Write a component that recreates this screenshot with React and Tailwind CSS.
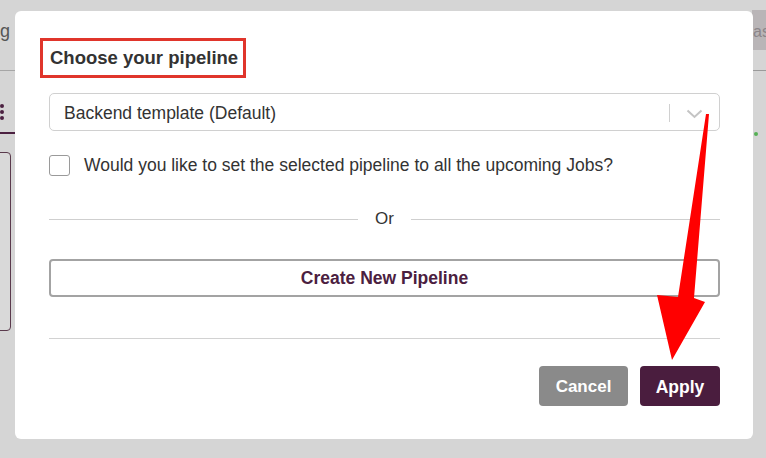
export default function App() {
  return (
    <div
      className="relative w-[766px] h-[458px] overflow-hidden bg-[#d5d5d5]"
      style={{ fontFamily: '"Liberation Sans", Arial, sans-serif' }}
    >
      {/* page behind the overlay */}
      <div className="absolute left-0 top-[18px] text-[18px] text-[#555]">g</div>
      <div className="absolute left-0 top-[70px] w-[16px] h-px bg-[#a6a6a6]" />
      <div className="absolute left-0 top-[104px] flex flex-col gap-[2px]">
        <span className="w-[4px] h-[4px] rounded-full bg-[#4b2040]" />
        <span className="w-[4px] h-[4px] rounded-full bg-[#4b2040]" />
        <span className="w-[4px] h-[4px] rounded-full bg-[#4b2040]" />
      </div>
      <div className="absolute left-0 top-[132px] w-[16px] h-[2px] bg-[#4b2040]" />
      <div className="absolute -left-[6px] top-[152px] w-[17px] h-[179px] rounded-[4px] border border-[#5a3a4c] bg-[#d9d9d9]" />
      <div className="absolute left-[752px] top-[10px] w-[14px] h-[40px] overflow-hidden bg-[#b9b5b7] text-[16px] text-[#8b8589] pt-[10px] pl-[1px]">
        as
      </div>
      <div className="absolute left-[752px] top-[70px] w-[20px] h-px bg-[#9a9a9a]" />
      <div className="absolute left-[754px] top-[132px] w-[4px] h-[4px] rounded-full bg-[#55b055]" />

      {/* modal */}
      <div className="absolute left-[15px] top-[11px] w-[738px] h-[428px] bg-white rounded-[6px] pt-[27px] pl-[34px] pr-[33px]">
        <div className="-ml-[9px] w-fit h-[40px] flex items-center border-[3px] border-[#e0352b] pl-[7px] pr-[5px]">
          <h2 className="text-[18.5px] leading-[24px] font-bold text-[#333]">Choose your pipeline</h2>
        </div>

        <div className="mt-[15px] h-[38px] rounded-[5px] border border-[#d0d0d0] flex items-center pl-[14px] pr-[16px] pt-[1px]">
          <span className="flex-1 text-[17.5px] leading-[24px] text-[#333]">Backend template (Default)</span>
          <span className="w-px h-[18px] bg-[#d0d0d0] mr-[16px]" />
          <svg width="17" height="10" viewBox="0 0 17 10" fill="none" className="mt-[2px]">
            <path d="M1.5 1.5 L8.5 8 L15.5 1.5" stroke="#c4c4c4" strokeWidth="2" />
          </svg>
        </div>

        <label className="mt-[22px] flex items-center gap-[14px]">
          <span className="w-[21px] h-[21px] rounded-[3px] border border-[#9a9a9a] bg-white" />
          <span className="text-[17.5px] leading-[24px] text-[#333]">
            Would you like to set the selected pipeline to all the upcoming Jobs?
          </span>
        </label>

        <div className="mt-[30px] flex items-center">
          <div className="flex-1 h-px bg-[#cfcfcf]" />
          <span className="px-[17px] text-[17px] leading-[24px] text-[#333]">Or</span>
          <div className="flex-1 h-px bg-[#cfcfcf]" />
        </div>

        <button className="mt-[28px] w-full h-[38px] rounded-[4px] border-2 border-[#a3a3a3] text-[17.5px] font-bold text-[#4b2040]">
          Create New Pipeline
        </button>

        <div className="mt-[41px] h-px bg-[#d2d2d2]" />

        <div className="mt-[27px] flex justify-end gap-[12px]">
          <button className="w-[89px] h-[40px] rounded-[4px] bg-[#8a8a8a] text-white text-[17px] font-bold pt-[2px]">
            Cancel
          </button>
          <button className="w-[80px] h-[40px] rounded-[4px] bg-[#4a1d3e] text-white text-[17.5px] font-bold pt-[2px]">
            Apply
          </button>
        </div>
      </div>

      {/* annotation arrow */}
      <svg className="absolute left-0 top-0" width="766" height="458" viewBox="0 0 766 458">
        <polygon
          points="706,114 709,114 694,298 705,302 672,360 657,295 678,297"
          fill="#ff0000"
        />
      </svg>
    </div>
  );
}
